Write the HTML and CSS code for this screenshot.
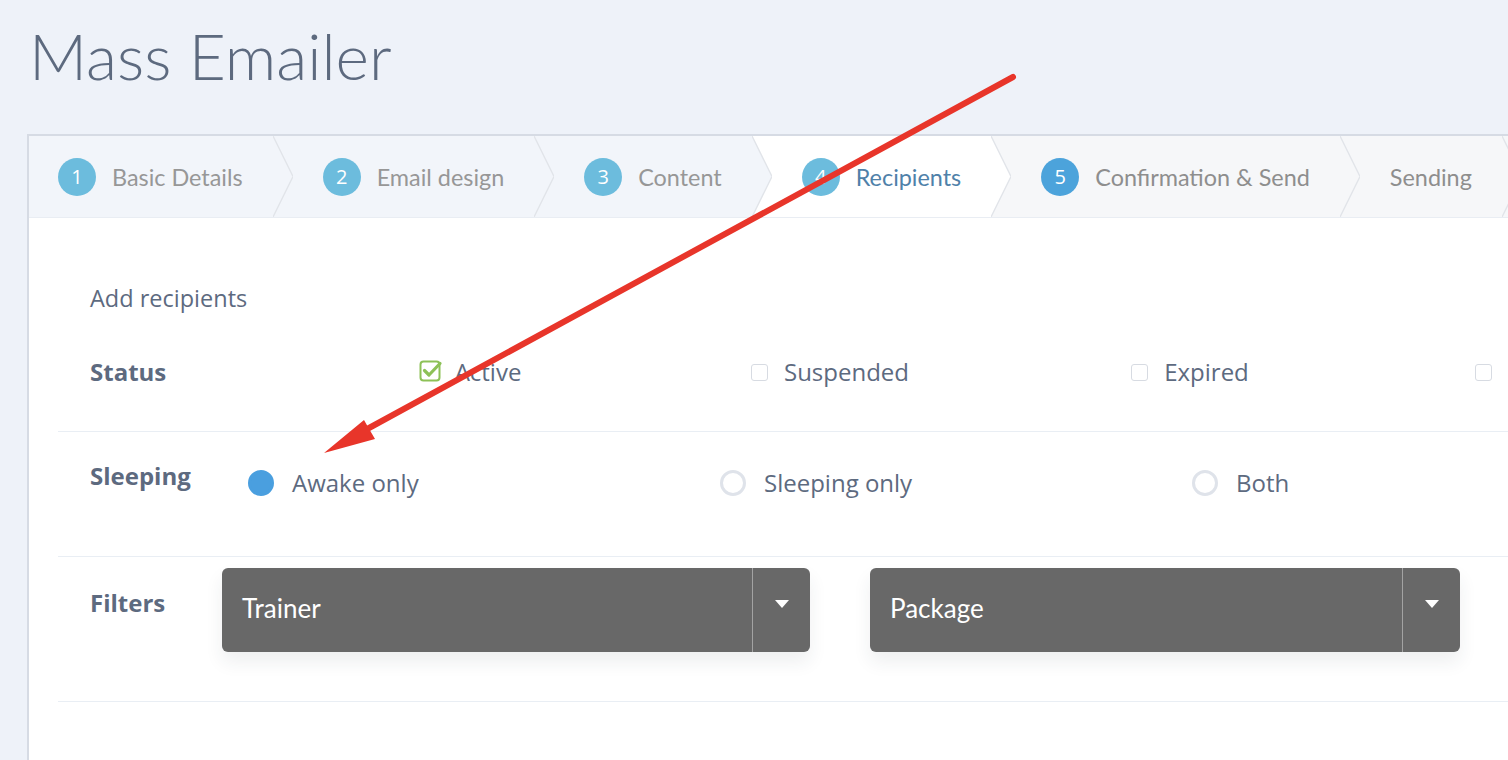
FILE: index.html
```html
<!DOCTYPE html>
<html lang="en">
<head>
<meta charset="utf-8">
<title>Mass Emailer</title>
<link rel="stylesheet" href="styles.css">
</head>
<body>
<h1 class="page-title">Mass Emailer</h1>

<section class="card">
  <nav class="steps">
    <div class="step done"><span class="num">1</span><span class="step-label">Basic Details</span></div>
    <svg class="sep sep-dd" viewBox="0 0 20 81" preserveAspectRatio="none"><polygon class="fl" points="0,0 20,40.5 0,81"/><polygon class="fr" points="0,0 20,0 20,81 0,81 20,40.5"/><polyline class="ln" points="0,0 20,40.5 0,81"/></svg>
    <div class="step done"><span class="num">2</span><span class="step-label">Email design</span></div>
    <svg class="sep sep-dd" viewBox="0 0 20 81" preserveAspectRatio="none"><polygon class="fl" points="0,0 20,40.5 0,81"/><polygon class="fr" points="0,0 20,0 20,81 0,81 20,40.5"/><polyline class="ln" points="0,0 20,40.5 0,81"/></svg>
    <div class="step done"><span class="num">3</span><span class="step-label">Content</span></div>
    <svg class="sep sep-da" viewBox="0 0 20 81" preserveAspectRatio="none"><polygon class="fl" points="0,0 20,40.5 0,81"/><polygon class="fr" points="0,0 20,0 20,81 0,81 20,40.5"/><polyline class="ln" points="0,0 20,40.5 0,81"/></svg>
    <div class="step active"><span class="num">4</span><span class="step-label">Recipients</span></div>
    <svg class="sep sep-at" viewBox="0 0 20 81" preserveAspectRatio="none"><polygon class="fl" points="0,0 20,40.5 0,81"/><polygon class="fr" points="0,0 20,0 20,81 0,81 20,40.5"/><polyline class="ln" points="0,0 20,40.5 0,81"/></svg>
    <div class="step todo"><span class="num num-next">5</span><span class="step-label">Confirmation &amp; Send</span></div>
    <svg class="sep sep-tt" viewBox="0 0 20 81" preserveAspectRatio="none"><polygon class="fl" points="0,0 20,40.5 0,81"/><polygon class="fr" points="0,0 20,0 20,81 0,81 20,40.5"/><polyline class="ln" points="0,0 20,40.5 0,81"/></svg>
    <div class="step todo"><span class="step-label">Sending</span></div>
    <svg class="sep sep-tt" viewBox="0 0 20 81" preserveAspectRatio="none"><polygon class="fl" points="0,0 20,40.5 0,81"/><polygon class="fr" points="0,0 20,0 20,81 0,81 20,40.5"/><polyline class="ln" points="0,0 20,40.5 0,81"/></svg>
    <div class="step todo step-rest"></div>
  </nav>

  <div class="content">
    <p class="intro">Add recipients</p>

    <div class="row status-row">
      <div class="row-label">Status</div>
      <label class="opt">
        <svg class="cb-checked" viewBox="0 0 26 26"><rect x="1.5" y="4.5" width="19" height="19" rx="3" fill="#fff" stroke="#8dc157" stroke-width="2"/><path d="M5.5 13.5 L10 18 L21 6.5" fill="none" stroke="#8dc157" stroke-width="3.2" stroke-linecap="round" stroke-linejoin="round"/></svg>
        <span>Active</span>
      </label>
      <label class="opt"><span class="cb"></span><span>Suspended</span></label>
      <label class="opt"><span class="cb"></span><span>Expired</span></label>
      <label class="opt opt-cut"><span class="cb"></span></label>
    </div>

    <div class="row sleep-row">
      <div class="row-label">Sleeping</div>
      <label class="opt"><span class="radio radio-on"></span><span>Awake only</span></label>
      <label class="opt"><span class="radio"></span><span>Sleeping only</span></label>
      <label class="opt"><span class="radio"></span><span>Both</span></label>
    </div>

    <div class="row filter-row">
      <div class="row-label">Filters</div>
      <div class="dropdown"><span class="dd-text">Trainer</span><span class="dd-toggle"><span class="caret"></span></span></div>
      <div class="dropdown"><span class="dd-text">Package</span><span class="dd-toggle"><span class="caret"></span></span></div>
    </div>
  </div>
</section>

<svg class="annotation" viewBox="0 0 1508 760" width="1508" height="760">
  <line x1="1013" y1="77" x2="369" y2="428" stroke="#e8352a" stroke-width="6" stroke-linecap="round"/>
  <polygon points="324,453 364,420 368,427 375,439" fill="#e8352a"/>
</svg>
</body>
</html>
```

FILE: styles.css
```css
html, body {
  margin: 0;
  padding: 0;
  overflow: hidden;
}

body {
  width: 1508px;
  height: 760px;
  background: #eef2f9;
  font-family: "Open Sans", "Noto Sans", sans-serif;
  color: #5d6a7f;
  position: relative;
}

.page-title {
  margin: 24px 0 0 29px;
  font-family: Lato, "Open Sans", sans-serif;
  font-size: 64px;
  line-height: 64px;
  font-weight: 300;
  color: #5d6a7f;
}

.card {
  margin: 46px -300px 0 27px;
  background: #fff;
  border-left: 2px solid #d6dbe4;
  border-top: 2px solid #d6dbe4;
  min-height: 700px;
}

/* ---------- wizard steps ---------- */
.steps {
  display: flex;
  height: 81px;
  border-bottom: 1px solid #e9edf3;
}

.step {
  display: flex;
  align-items: center;
  gap: 16px;
  padding: 0 30px;
  font-family: Lato, "Open Sans", sans-serif;
  font-size: 23.4px;
  white-space: nowrap;
}

.step:first-child { padding-left: 29px; }

.step.done { background: #f2f5fa; color: #979797; }
.step.active { background: #fff; color: #4f81a9; }
.step.todo { background: #f6f7f9; color: #8e8e8e; }
.step-rest { flex: 1; }

.num {
  width: 38px;
  height: 38px;
  border-radius: 50%;
  background: #6cbcdd;
  color: #fff;
  font-family: "Open Sans", sans-serif;
  font-size: 20px;
  display: flex;
  align-items: center;
  justify-content: center;
  flex: none;
}

.num-next { background: #4ca3db; }

.sep {
  width: 20px;
  height: 81px;
  flex: none;
  display: block;
}

.sep .ln { fill: none; stroke: #e1e4e9; stroke-width: 1.4; }
.sep-dd .fl, .sep-dd .fr { fill: #f2f5fa; }
.sep-da .fl { fill: #f2f5fa; }
.sep-da .fr { fill: #fff; }
.sep-at .fl { fill: #fff; }
.sep-at .fr { fill: #f6f7f9; }
.sep-tt .fl, .sep-tt .fr { fill: #f6f7f9; }

/* ---------- content ---------- */
.content {
  padding: 64px 0 0 29px;
}

.intro {
  margin: 0;
  padding-left: 32px;
  font-size: 23.5px;
  line-height: 32px;
  color: #5d6a7f;
}

.row {
  display: grid;
  align-items: start;
  padding-left: 32px;
  border-bottom: 1px solid #e9eef4;
}

.row-label {
  font-size: 24px;
  line-height: 32px;
  font-weight: 700;
  color: #5d6a7f;
  white-space: nowrap;
}

.opt {
  display: inline-flex;
  align-items: center;
  gap: 16px;
  min-height: 32px;
  font-size: 24px;
  line-height: 32px;
  color: #5d6a7f;
  white-space: nowrap;
}

.status-row {
  grid-template-columns: 200px repeat(4, 360px);
  padding-top: 42px;
  padding-bottom: 43px;
}

.status-row .opt { justify-self: center; }
.status-row .opt-cut { justify-self: start; margin-left: 105px; }

.cb {
  width: 15px;
  height: 15px;
  border: 1.5px solid #d7dbe2;
  border-radius: 3px;
  background: #fff;
  flex: none;
}

.cb-checked {
  width: 26px;
  height: 26px;
  flex: none;
  margin-right: -6px;
  margin-top: -4px;
}

.sleep-row {
  grid-template-columns: 158px repeat(3, 472px);
  padding-top: 28px;
  padding-bottom: 57px;
}

.sleep-row .opt { margin-top: 7px; gap: 18px; }

.radio {
  width: 20px;
  height: 20px;
  border: 3px solid #dfe3ea;
  border-radius: 50%;
  flex: none;
  background: #fff;
}

.radio-on {
  border-color: #4a9fdf;
  background: #4a9fdf;
}

.filter-row {
  grid-template-columns: 72px 588px 590px;
  column-gap: 60px;
  padding-top: 11px;
  padding-bottom: 49px;
}

.filter-row .row-label { margin-top: 19px; }

.dropdown {
  display: flex;
  height: 84px;
  background: #686868;
  border-radius: 6px;
  box-shadow: 0 10px 18px rgba(40, 50, 70, 0.08);
  color: #fff;
}

.dd-text {
  flex: 1;
  padding-left: 20px;
  font-family: Lato, "Open Sans", sans-serif;
  font-size: 26px;
  line-height: 80px;
}

.dd-toggle {
  width: 57px;
  border-left: 1px solid #a3a3a3;
  display: flex;
  align-items: center;
  justify-content: center;
}

.caret {
  width: 0;
  height: 0;
  border-left: 7px solid transparent;
  border-right: 7px solid transparent;
  border-top: 8px solid #fff;
  margin-bottom: 12px;
}

/* ---------- annotation overlay ---------- */
.annotation {
  position: absolute;
  left: 0;
  top: 0;
  pointer-events: none;
}
```
